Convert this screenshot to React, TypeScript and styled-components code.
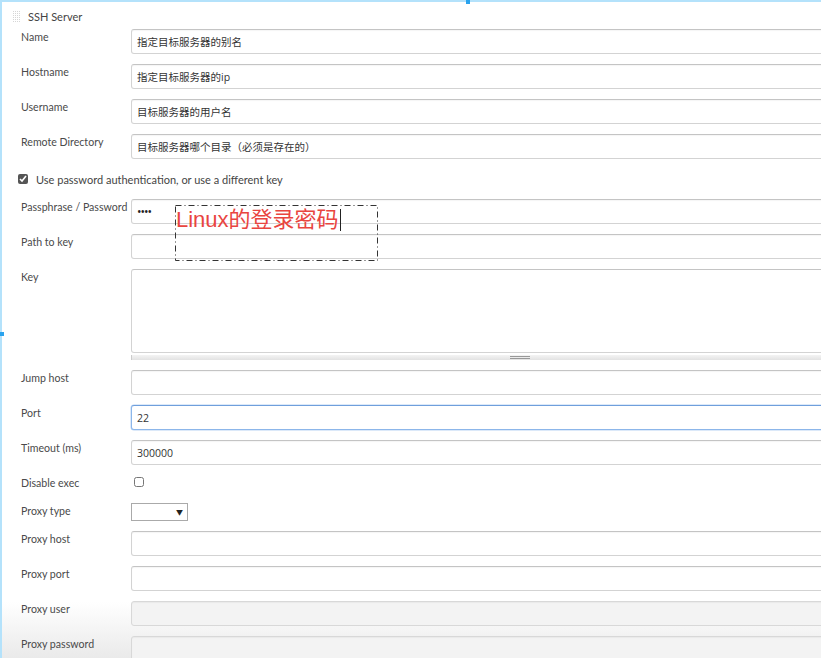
import React from 'react'
import styled, { createGlobalStyle, css } from 'styled-components'

const GlobalStyle = createGlobalStyle`
  html, body {
    margin: 0;
    padding: 0;
    overflow: hidden;
    background: #fff;
  }
  body {
    font-family: Lato, 'Noto Sans CJK SC', sans-serif;
  }
`

const Page = styled.div`
  position: relative;
  width: 900px;
  height: 658px;
  box-sizing: border-box;
  border-top: 2px solid #b4e2fb;
  border-left: 2px solid #b4e2fb;
  background: linear-gradient(to bottom, #fff 600px, #e9e9e9 658px);
  color: #4a4a4a;
  font-size: 10.6px;
`

const Marker = styled.div<{ $top?: number; $left?: number }>`
  position: absolute;
  width: 4px;
  height: 4px;
  background: #2aa3ee;
  ${({ $top, $left }) => css`
    top: ${$top ?? -2}px;
    left: ${$left ?? -2}px;
  `}
`

const Header = styled.div`
  display: flex;
  align-items: center;
  height: 27px;
  padding: 2px 0 0 10px;
  box-sizing: border-box;
  gap: 7px;
  font-size: 11px;
  color: #444;
`

const Handle = styled.div`
  width: 9px;
  height: 13px;
  background-image: linear-gradient(to right, #fff 1px, transparent 1px),
    linear-gradient(to bottom, #fff 1px, transparent 1px);
  background-color: #d6d6d6;
  background-size: 2px 2px;
`

const Form = styled.div`
  display: flex;
  flex-direction: column;
  padding-left: 19px;
`

const Row = styled.div<{ $gap?: number }>`
  display: grid;
  grid-template-columns: 110px 1fr;
  align-items: start;
  margin-bottom: ${({ $gap }) => $gap ?? 10}px;
`

const Label = styled.div`
  line-height: 16px;
  white-space: nowrap;
`

const Input = styled.input<{ $focused?: boolean }>`
  box-sizing: border-box;
  height: 25px;
  width: 100%;
  margin: 0;
  padding: 0 5px;
  border: 1px solid #d3d3d3;
  border-top-color: #c4c4c4;
  border-radius: 3px;
  background: #fff;
  box-shadow: inset 0 1px 1px rgba(0, 0, 0, 0.04);
  font-family: 'Open Sans', 'Noto Sans CJK SC', sans-serif;
  font-size: 10.5px;
  color: #333;
  outline: none;
  &:disabled {
    background: #f3f3f3;
    border-color: #d8d8d8;
  }
  ${({ $focused }) =>
    $focused &&
    css`
      border: 1px solid #8cb6ea;
      border-top-color: #6f9fdc;
      box-shadow: 0 0 0 0.5px #b9d3f3;
    `}
`

const Password = styled(Input)`
  font-size: 12px;
  letter-spacing: -1px;
  color: #222;
`

const TextArea = styled.textarea`
  display: block;
  box-sizing: border-box;
  height: 84px;
  width: 100%;
  margin: 0;
  padding: 4px 5px;
  border: 1px solid #d3d3d3;
  border-top-color: #c4c4c4;
  border-radius: 3px;
  resize: none;
  outline: none;
`

const Grip = styled.div`
  display: flex;
  justify-content: center;
  align-items: center;
  height: 5px;
  margin-top: 2px;
  background: linear-gradient(to bottom, #f4f4f4, #e2e2e2);
  border-left: 1px solid #ccc;
  &::after {
    content: '';
    width: 20px;
    height: 3px;
    border-top: 1px solid #999;
    border-bottom: 1px solid #999;
    box-sizing: border-box;
    margin-left: 7px;
  }
`

const CheckRow = styled.label`
  display: flex;
  align-items: center;
  gap: 8px;
  height: 20px;
  margin: 10px 0 10px -3px;
  font-size: 11px;
  color: #444;
`

const Check = styled.input`
  width: 10px;
  height: 10px;
  margin: 0;
  accent-color: #555;
`

const SmallCheck = styled(Check)`
  margin: 2px 0 0 3px;
  accent-color: #fff;
`

const Select = styled.div`
  box-sizing: border-box;
  display: flex;
  align-items: center;
  justify-content: flex-end;
  width: 57px;
  height: 18px;
  padding-right: 4px;
  border: 1px solid #aaa;
  background: #fff;
  font-size: 7px;
  color: #222;
`

const Annotation = styled.div`
  position: absolute;
  left: 173px;
  top: 203px;
  width: 203px;
  height: 56px;
`

const Note = styled.div`
  position: absolute;
  left: 1px;
  top: 2px;
  display: flex;
  align-items: center;
  font-family: 'Liberation Sans', 'Noto Sans CJK SC', sans-serif;
  font-size: 22px;
  line-height: 26px;
  color: #e9453f;
  &::after {
    content: '';
    width: 1px;
    height: 22px;
    margin-left: 1px;
    background: #222;
  }
`

const Logo = styled.svg`
  position: absolute;
  right: 0;
  top: 622px;
`

const Field: React.FC<{ label: string; value?: string; disabled?: boolean; focused?: boolean }> = ({
  label,
  value,
  disabled,
  focused,
}) => (
  <Row>
    <Label>{label}</Label>
    <Input readOnly value={value ?? ''} disabled={disabled} $focused={focused} />
  </Row>
)

export default function App() {
  return (
    <Page>
      <GlobalStyle />
      <Marker $left={464} />
      <Marker $top={330} />
      <Header>
        <Handle />
        <span>SSH Server</span>
      </Header>
      <Form>
        <Field label="Name" value="指定目标服务器的别名" />
        <Field label="Hostname" value="指定目标服务器的ip" />
        <Field label="Username" value="目标服务器的用户名" />
        <Row $gap={0}>
          <Label>Remote Directory</Label>
          <Input readOnly value="目标服务器哪个目录（必须是存在的）" />
        </Row>
        <CheckRow>
          <Check type="checkbox" defaultChecked />
          Use password authentication, or use a different key
        </CheckRow>
        <Row>
          <Label>Passphrase / Password</Label>
          <Password type="password" readOnly value="abcd" />
        </Row>
        <Field label="Path to key" />
        <Row $gap={10}>
          <Label>Key</Label>
          <div>
            <TextArea readOnly />
            <Grip />
          </div>
        </Row>
        <Field label="Jump host" />
        <Field label="Port" value="22" focused />
        <Field label="Timeout (ms)" value="300000" />
        <Row $gap={12}>
          <Label>Disable exec</Label>
          <SmallCheck type="checkbox" />
        </Row>
        <Row>
          <Label>Proxy type</Label>
          <Select>▼</Select>
        </Row>
        <Field label="Proxy host" />
        <Field label="Proxy port" />
        <Field label="Proxy user" disabled />
        <Field label="Proxy password" disabled />
      </Form>
      <Annotation>
        <svg width="203" height="56">
          <rect x="0.5" y="0.5" width="202" height="55" fill="none" stroke="#333" strokeDasharray="6 3 1 3" />
        </svg>
        <Note>Linux的登录密码</Note>
      </Annotation>
      <Logo width="8" height="26" viewBox="0 0 8 26">
        <path d="M2 4 L8 2 L8 20 L5 22 Z" fill="#f06a1d" />
      </Logo>
    </Page>
  )
}
